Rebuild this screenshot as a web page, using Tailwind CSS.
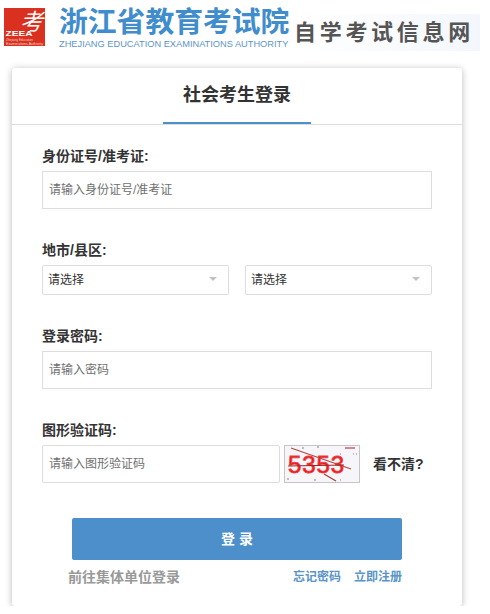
<!DOCTYPE html>
<html>
<head>
	<meta charset="utf-8">
	<title>社会考生登录</title>
	<script src="https://cdn.jsdelivr.net/npm/@tailwindcss/browser@4"></script>
</head>
<body class="bg-white font-['Liberation_Sans','Noto_Sans_CJK_SC',sans-serif] text-[#333]">

	<!-- header banner -->
	<div class="h-[68px] flex items-start overflow-hidden">
		<svg class="ml-1 mt-2 w-[41px] h-[38px] shrink-0" viewBox="0 0 41 38">
			<rect width="41" height="38" fill="#d9301f"/>
			<text x="16" y="22" font-size="23" font-style="italic" fill="#fff" font-family="Noto Sans CJK SC">考</text>
			<text x="1.5" y="28" font-size="6.5" font-weight="700" fill="#fff" font-family="Liberation Sans" textLength="27" lengthAdjust="spacingAndGlyphs">ZEEA</text>
			<text x="2" y="32.5" font-size="3" fill="#f5d0c8" font-family="Liberation Sans" textLength="27" lengthAdjust="spacingAndGlyphs">Zhejiang Education</text>
			<text x="2" y="36.5" font-size="3" fill="#f5d0c8" font-family="Liberation Sans" textLength="37" lengthAdjust="spacingAndGlyphs">Examinations Authority</text>
		</svg>
		<div class="ml-[14px] mt-[6px] w-[232px] shrink-0">
			<div class="text-[28.8px] leading-[33px] font-bold text-[#3f8dcc] whitespace-nowrap">浙江省教育考试院</div>
			<div class="text-[9.25px] leading-[11px] text-[#5b95c8] whitespace-nowrap">ZHEJIANG EDUCATION EXAMINATIONS AUTHORITY</div>
		</div>
		<div class="mt-[14px] ml-[3px] w-[186px] h-[37px] flex items-center bg-gradient-to-r from-white to-[#f3f7fc] text-[#555] text-[22px] leading-[30px] font-bold whitespace-nowrap tracking-[3.7px]">自学考试信息网</div>
	</div>

	<!-- login card -->
	<div class="ml-3 w-[450px] h-[538px] bg-white rounded-[3px] shadow-[0_1px_7px_rgba(0,0,0,0.28)]">
		<div class="h-[57px] border-b border-[#ddd] flex justify-center">
			<div class="w-[148px] h-[56px] border-b-2 border-[#4c8fca] flex items-center justify-center text-[18px] font-bold text-[#333]">社会考生登录</div>
		</div>

		<form class="px-[30px] pt-[21px]">
			<div class="mb-[31px]">
				<label class="block h-5 mb-[5px] text-[14px] leading-5 font-bold text-[#333]">身份证号/准考证:</label>
				<input class="block w-full h-[38px] border border-[#ddd] px-[6px] text-xs outline-none placeholder:text-[#6f6f6f]" type="text" placeholder="请输入身份证号/准考证">
			</div>

			<div class="mb-[31px]">
				<label class="block h-5 mb-[5px] text-[14px] leading-5 font-bold text-[#333]">地市/县区:</label>
				<div class="flex gap-4">
					<div class="relative w-[187px] h-[30px] border border-[#ddd] rounded-[2px] flex items-center pl-[5px] text-xs text-[#333]">
						请选择
						<span class="absolute right-[11px] top-[11px] w-0 h-0 border-x-[4px] border-t-[4px] border-x-transparent border-t-[#c2c2c2]"></span>
					</div>
					<div class="relative w-[187px] h-[30px] border border-[#ddd] rounded-[2px] flex items-center pl-[5px] text-xs text-[#333]">
						请选择
						<span class="absolute right-[11px] top-[11px] w-0 h-0 border-x-[4px] border-t-[4px] border-x-transparent border-t-[#c2c2c2]"></span>
					</div>
				</div>
			</div>

			<div class="mb-[31px]">
				<label class="block h-5 mb-[5px] text-[14px] leading-5 font-bold text-[#333]">登录密码:</label>
				<input class="block w-full h-[38px] border border-[#ddd] px-[6px] text-xs outline-none placeholder:text-[#6f6f6f]" type="password" placeholder="请输入密码">
			</div>

			<div class="mb-[35px]">
				<label class="block h-5 mb-[5px] text-[14px] leading-5 font-bold text-[#333]">图形验证码:</label>
				<div class="flex items-center">
					<input class="block w-[238px] h-[38px] border border-[#ddd] rounded-[2px] px-[6px] text-xs outline-none placeholder:text-[#6f6f6f]" type="text" placeholder="请输入图形验证码">
					<svg class="ml-1 w-[76px] h-[38px] shrink-0" viewBox="0 0 76 38">
						<rect width="76" height="38" fill="#f6f6fa"/>
						<rect x="0.5" y="0.5" width="75" height="37" fill="none" stroke="#c9c3c6"/>
						<text x="4" y="28" font-size="24" fill="#e8141c" stroke="#f04040" stroke-width="0.8" font-family="Liberation Sans" textLength="56">5353</text>
						<path d="M7 3 L67 24" stroke="#b5483f" stroke-width="1.2"/>
						<path d="M4 21 L60 20" stroke="#a02020" stroke-width="1"/>
						<path d="M40 29 L52 36" stroke="#a8433c" stroke-width="1.4"/>
						<path d="M61 3 L71 3" stroke="#c0394f" stroke-width="1.2"/>
						<path d="M33 2h2M18 3h2M56 9h1M69 9h1M72 9h1M3 34h2M30 35h2M56 35h1M55 14h1" stroke="#8a7a7a"/>
					</svg>
					<span class="ml-[13px] text-[14px] font-bold text-[#333]">看不清?</span>
				</div>
			</div>

			<div class="mx-[30px]">
				<button type="button" class="block w-full h-[42px] bg-[#4c8fca] rounded-[2px] text-white text-[14px] font-bold tracking-[4px] pl-[4px]">登录</button>
				<div class="mt-[7px] h-5 flex items-center justify-between">
					<a class="ml-[-4px] text-[14px] font-bold text-[#999]">前往集体单位登录</a>
					<div class="flex gap-[13px] text-xs font-bold text-[#5a94c9]">
						<a>忘记密码</a>
						<a>立即注册</a>
					</div>
				</div>
			</div>
		</form>
	</div>

</body>
</html>
